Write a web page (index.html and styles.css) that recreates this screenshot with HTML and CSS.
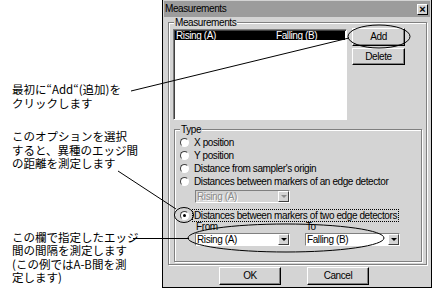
FILE: index.html
```html
<!DOCTYPE html>
<html lang="ja">
<head>
<meta charset="utf-8">
<title>Measurements</title>
<link rel="stylesheet" href="styles.css">
</head>
<body>
<div class="page">
  <div class="notes">
    <p class="note note1">最初に“Add“(追加)を<br>クリックします</p>
    <p class="note note2">このオプションを選択<br>すると、異種のエッジ間<br>の距離を測定します</p>
    <p class="note note3">この欄で指定したエッジ<br>間の間隔を測定します<br>(この例ではA-B間を測<br>定します)</p>
  </div>
  <div class="dialog">
    <div class="titlebar">
      <span class="title">Measurements</span>
      <span class="close">×</span>
    </div>
    <div class="content">
      <div class="group group-meas">
        <span class="group-label">Measurements</span>
        <div class="top-row">
          <div class="listbox">
            <div class="list-item selected"><span class="col1">Rising (A)</span><span>Falling (B)</span></div>
          </div>
          <div class="side-buttons">
            <div class="btn btn-add">Add</div>
            <div class="btn btn-delete">Delete</div>
          </div>
        </div>
        <div class="group group-type">
          <span class="group-label">Type</span>
          <div class="radio-row"><span class="radio"></span><span class="rlabel">X position</span></div>
          <div class="radio-row"><span class="radio"></span><span class="rlabel">Y position</span></div>
          <div class="radio-row"><span class="radio"></span><span class="rlabel">Distance from sampler's origin</span></div>
          <div class="radio-row"><span class="radio"></span><span class="rlabel">Distances between markers of an edge detector</span></div>
          <div class="combo combo-single disabled"><span class="ctext">Rising (A)</span><span class="cbtn"><span class="arrow"></span></span></div>
          <div class="radio-row row-two"><span class="radio checked"></span><span class="rlabel focus">Distances between markers of two edge detectors</span></div>
          <div class="pair">
            <div class="pair-col">
              <span class="small-label">From</span>
              <div class="combo"><span class="ctext">Rising (A)</span><span class="cbtn"><span class="arrow"></span></span></div>
            </div>
            <div class="pair-col">
              <span class="small-label">To</span>
              <div class="combo"><span class="ctext">Falling (B)</span><span class="cbtn"><span class="arrow"></span></span></div>
            </div>
          </div>
        </div>
      </div>
      <div class="bottom-buttons">
        <div class="btn btn-wide">OK</div>
        <div class="btn btn-wide">Cancel</div>
      </div>
    </div>
  </div>
  <svg class="overlay" width="437" height="299" viewBox="0 0 437 299">
    <line x1="131" y1="91" x2="349" y2="38"/>
    <line x1="118" y1="171" x2="176" y2="209"/>
    <line x1="133" y1="238.5" x2="189" y2="238.5"/>
    <ellipse cx="379" cy="36.5" rx="31" ry="11.5"/>
    <ellipse cx="184" cy="215" rx="9.5" ry="7.5"/>
    <ellipse cx="286" cy="238" rx="98" ry="14"/>
  </svg>
</div>
</body>
</html>
```
FILE: styles.css
```css
html, body {
  margin: 0;
  padding: 0;
  background: #fff;
}
body {
  width: 437px;
  height: 299px;
  overflow: hidden;
  font-family: "Liberation Sans", Arial, sans-serif;
  color: #000;
}
.page {
  position: relative;
  display: flex;
  width: 437px;
  height: 299px;
}
.notes {
  width: 162px;
  flex: none;
  box-sizing: border-box;
  padding-left: 12px;
  font-family: "Noto Sans CJK JP", sans-serif;
  font-size: 11.5px;
  line-height: 13.5px;
}
.note {
  margin: 0;
  white-space: nowrap;
}
.note1 { margin-top: 83px; }
.note2 { margin-top: 20px; }
.note3 { margin-top: 60px; }

.dialog {
  flex: none;
  width: 270px;
  height: 288px;
  box-sizing: border-box;
  background: #d4d4d4;
  border: 1px solid #000;
  border-top: none;
  font-size: 10px;
  letter-spacing: -0.4px;
}
.titlebar {
  display: flex;
  align-items: center;
  justify-content: space-between;
  height: 16px;
  margin: 1px 1px 0;
  background: #9c9c9c;
}
.title {
  padding-left: 1px;
  line-height: 16px;
}
.close {
  width: 11px;
  height: 11px;
  margin-right: 2px;
  box-sizing: border-box;
  background: #d4d4d4;
  border: 1px solid;
  border-color: #fff #000 #000 #fff;
  font-size: 11px;
  font-weight: bold;
  line-height: 8px;
  text-align: center;
  letter-spacing: 0;
}
.content {
  padding: 5px 3px 0 5px;
}
.group {
  position: relative;
  border: 1px solid #808080;
  box-shadow: 1px 1px 0 #fff, inset 1px 1px 0 #fff;
}
.group-label {
  position: absolute;
  top: -6px;
  left: 5px;
  padding: 0 1px;
  line-height: 11px;
  background: #d4d4d4;
}
.group-meas {
  width: 259px;
  box-sizing: border-box;
  padding: 6px 0 2px 4px;
}
.top-row {
  display: flex;
}
.listbox {
  width: 174px;
  height: 91px;
  box-sizing: border-box;
  background: #fff;
  border: 1px solid;
  border-color: #808080 #fff #fff #808080;
  box-shadow: inset 1px 1px 0 #404040;
  padding: 1px 1px 0 1px;
}
.list-item {
  display: flex;
  height: 9px;
  line-height: 9px;
  padding-left: 1px;
}
.list-item.selected {
  background: #000;
  color: #fff;
}
.col1 {
  width: 100px;
}
.side-buttons {
  display: flex;
  flex-direction: column;
  gap: 2px;
  margin-left: 5px;
  margin-top: -1px;
}
.btn {
  box-sizing: border-box;
  background: #d4d4d4;
  border: 1px solid;
  border-color: #fff #000 #000 #fff;
  box-shadow: inset -1px -1px 0 #808080;
  text-align: center;
}
.btn-add {
  width: 53px;
  height: 18px;
  line-height: 16px;
}
.btn-delete {
  width: 53px;
  height: 17px;
  line-height: 15px;
}
.group-type {
  width: 248px;
  box-sizing: border-box;
  margin: 9px 0 0 1px;
  padding: 6px 0 15px 5px;
}
.radio-row {
  display: flex;
  align-items: center;
  height: 13px;
}
.radio {
  flex: none;
  width: 9px;
  height: 9px;
  box-sizing: border-box;
  border-radius: 50%;
  background: #fff;
  border: 1px solid;
  border-color: #404040 #fff #fff #404040;
  margin-right: 5px;
  position: relative;
}
.radio.checked::after {
  content: "";
  position: absolute;
  left: 2px;
  top: 2px;
  width: 3px;
  height: 3px;
  border-radius: 50%;
  background: #000;
}
.rlabel {
  line-height: 11px;
  white-space: nowrap;
}
.focus {
  outline: 1px dotted #000;
  padding: 0 1px;
  margin-left: -1px;
}
.combo {
  display: flex;
  justify-content: space-between;
  align-items: center;
  width: 95px;
  height: 13px;
  box-sizing: border-box;
  background: #fff;
  border: 1px solid;
  border-color: #808080 #fff #fff #808080;
}
.combo-single {
  margin: 2px 0 0 15px;
}
.ctext {
  padding-left: 1px;
  line-height: 11px;
  white-space: nowrap;
}
.cbtn {
  display: flex;
  align-items: center;
  justify-content: center;
  width: 11px;
  height: 11px;
  box-sizing: border-box;
  background: #d4d4d4;
  border: 1px solid;
  border-color: #fff #404040 #404040 #fff;
}
.arrow {
  width: 0;
  height: 0;
  border-left: 3px solid transparent;
  border-right: 3px solid transparent;
  border-top: 3px solid #000;
}
.disabled {
  background: #d4d4d4;
  color: #8a8a8a;
}
.disabled .ctext {
  text-shadow: 1px 1px 0 #fff;
}
.disabled .arrow {
  border-top-color: #8a8a8a;
}
.row-two {
  margin-top: 6px;
}
.pair {
  display: flex;
  gap: 15px;
  margin-left: 15px;
}
.pair-col {
  display: flex;
  flex-direction: column;
}
.small-label {
  height: 9px;
  line-height: 9px;
  margin-bottom: 2px;
  padding-left: 1px;
}
.bottom-buttons {
  display: flex;
  gap: 26px;
  padding-left: 51px;
  margin-top: 2px;
}
.btn-wide {
  width: 62px;
  height: 18px;
  line-height: 16px;
}
.overlay {
  position: absolute;
  left: 0;
  top: 0;
  pointer-events: none;
}
.overlay line, .overlay ellipse {
  stroke: #000;
  stroke-width: 1;
  fill: none;
}
```
